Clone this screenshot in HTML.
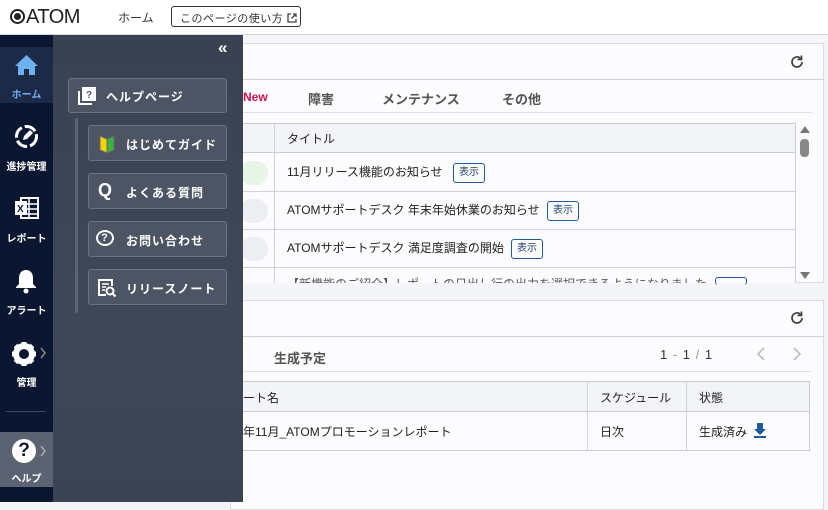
<!DOCTYPE html>
<html><head><meta charset="utf-8"><style>
*{box-sizing:border-box;margin:0;padding:0}
body{width:828px;height:502px;overflow:hidden;background:#f3f5f9;font-family:"Liberation Sans","Noto Sans CJK JP",sans-serif;color:#222;position:relative;font-size:12px}
.abs{position:absolute}
.hdr{left:0;top:0;width:828px;height:35px;background:#fff;border-bottom:1px solid #d5d8de}
.card{background:#fcfcfe;border:1px solid #d9dce2}
.line{background:#cfd2d8}
.t{position:absolute;white-space:nowrap}
.btn{position:absolute;border:1px solid #1f5a9a;border-radius:3px;color:#1f3f66;font-size:10px;height:20px;width:32px;text-align:center;line-height:18px}
.side{left:0;top:35px;width:53px;height:467px;background:#0b1630}
.sl{position:absolute;width:53px;text-align:center;color:#fff;font-size:10px;font-weight:bold}
.fly{left:53px;top:35px;width:190px;height:467px;background:linear-gradient(180deg,#3a4252,#3e4758 60%,#3b4454)}
.fb{position:absolute;border:1px solid #6b7282;border-radius:3px;background:#4d5565;color:#fff;font-weight:bold;font-size:12px;letter-spacing:1px}
</style></head><body>
<div class="abs hdr">
 <div class="t" style="left:10px;top:6px;font-size:20px;color:#222;letter-spacing:-0.5px"><span style="display:inline-block;width:15px;height:15px;border:2px solid #222;border-radius:50%;position:relative;top:1px;margin-right:1px"><span style="position:absolute;left:2px;top:2px;width:7px;height:7px;background:#222;border-radius:50%"></span></span>ATOM</div>
 <div class="t" style="left:118px;top:9px;font-size:12px;color:#333">ホーム</div>
 <div class="abs" style="left:171px;top:6px;width:130px;height:21px;border:1px solid #333;border-radius:3px;font-size:11px;color:#333;padding:3px 0 0 8px;letter-spacing:0.5px;white-space:nowrap">このページの使い方 <svg style="position:relative;top:1px" width="10" height="10" viewBox="0 0 10 10"><path d="M4 1H1v8h8V6M6 1h3v3M9 1L4.5 5.5" fill="none" stroke="#444" stroke-width="1.3"/></svg></div>
</div>

<!-- card 1 -->
<div class="abs card" style="left:230px;top:43px;width:594px;height:240px"></div>
<div class="abs line" style="left:230px;top:79px;width:594px;height:1px"></div>
<svg class="abs" style="left:789px;top:54px" width="16" height="16" viewBox="0 0 16 16"><path d="M13 8a5 5 0 1 1-1.5-3.6" fill="none" stroke="#333" stroke-width="1.6"/><path d="M12.5 1.5v4h-4" fill="none" stroke="#333" stroke-width="1.6"/></svg>
<div class="t" style="left:243px;top:90px;color:#d0114b;font-weight:bold;font-size:12px">New</div>
<div class="t" style="left:308px;top:89px;color:#555;font-weight:bold;font-size:13px">障害</div>
<div class="t" style="left:382px;top:89px;color:#555;font-weight:bold;font-size:13px">メンテナンス</div>
<div class="t" style="left:502px;top:89px;color:#555;font-weight:bold;font-size:13px">その他</div>
<div class="abs" style="left:230px;top:112px;width:582px;height:1px;background:#dfe1e6"></div>
<div class="abs" style="left:230px;top:123px;width:566px;height:160px;border:1px solid #c9ccd2;border-bottom:none;background:#fcfcfe"></div>
<div class="abs" style="left:231px;top:124px;width:564px;height:29px;background:#f3f4f8;border-bottom:1px solid #c9ccd2"></div>
<div class="abs line" style="left:274px;top:123px;width:1px;height:160px"></div>
<div class="abs line" style="left:230px;top:191px;width:566px;height:1px"></div>
<div class="abs line" style="left:230px;top:229px;width:566px;height:1px"></div>
<div class="abs line" style="left:230px;top:267px;width:566px;height:1px"></div>
<div class="t" style="left:287px;top:130px">タイトル</div>
<div class="abs" style="left:240px;top:161px;width:28px;height:24px;background:#e6f5e6;border-radius:12px"></div>
<div class="abs" style="left:240px;top:199px;width:28px;height:24px;background:#eceef2;border-radius:12px"></div>
<div class="abs" style="left:240px;top:237px;width:28px;height:24px;background:#eceef2;border-radius:12px"></div>
<div class="t" style="left:287px;top:163px">11月リリース機能のお知らせ</div><div class="btn" style="left:453px;top:163px">表示</div>
<div class="t" style="left:287px;top:201px">ATOMサポートデスク 年末年始休業のお知らせ</div><div class="btn" style="left:547px;top:201px">表示</div>
<div class="t" style="left:287px;top:239px">ATOMサポートデスク 満足度調査の開始</div><div class="btn" style="left:511px;top:239px">表示</div>
<div class="abs" style="left:287px;top:277px;width:420px;height:6px;overflow:hidden;color:#555"><span style="position:relative;top:-2px">【新機能のご紹介】レポートの日出し行の出力を選択できるようになりました</span></div>
<div class="btn" style="left:715px;top:277px;height:8px;border-bottom:none"></div>
<div class="abs" style="left:800px;top:126px;width:0;height:0;border-left:5px solid transparent;border-right:5px solid transparent;border-bottom:7px solid #777"></div>
<div class="abs" style="left:800px;top:139px;width:9px;height:18px;background:#888;border-radius:4px"></div>
<div class="abs" style="left:800px;top:272px;width:0;height:0;border-left:5px solid transparent;border-right:5px solid transparent;border-top:7px solid #777"></div>

<!-- card 2 -->
<div class="abs card" style="left:230px;top:300px;width:594px;height:210px"></div>
<div class="abs line" style="left:230px;top:336px;width:594px;height:1px"></div>
<svg class="abs" style="left:789px;top:310px" width="16" height="16" viewBox="0 0 16 16"><path d="M13 8a5 5 0 1 1-1.5-3.6" fill="none" stroke="#333" stroke-width="1.6"/><path d="M12.5 1.5v4h-4" fill="none" stroke="#333" stroke-width="1.6"/></svg>
<div class="t" style="left:274px;top:348px;color:#555;font-weight:bold;font-size:13px">生成予定</div>
<div class="t" style="left:660px;top:347px;color:#333;letter-spacing:1px;font-size:13px">1 <span style="color:#999">-</span> 1 <span style="color:#999">/</span> 1</div>
<svg class="abs" style="left:756px;top:347px" width="10" height="14" viewBox="0 0 10 14"><path d="M8 1L2 7l6 6" fill="none" stroke="#bbb" stroke-width="1.6"/></svg>
<svg class="abs" style="left:792px;top:347px" width="10" height="14" viewBox="0 0 10 14"><path d="M2 1l6 6-6 6" fill="none" stroke="#bbb" stroke-width="1.6"/></svg>
<div class="abs" style="left:230px;top:371px;width:582px;height:1px;background:#dfe1e6"></div>
<div class="abs" style="left:230px;top:381px;width:580px;height:70px;border:1px solid #c9ccd2"></div>
<div class="abs" style="left:231px;top:382px;width:578px;height:30px;background:#f3f4f8;border-bottom:1px solid #c9ccd2"></div>
<div class="abs line" style="left:587px;top:381px;width:1px;height:70px"></div>
<div class="abs line" style="left:686px;top:381px;width:1px;height:70px"></div>
<div class="t" style="left:243px;top:389px">ート名</div>
<div class="t" style="left:600px;top:389px">スケジュール</div>
<div class="t" style="left:699px;top:389px">状態</div>
<div class="t" style="left:243px;top:423px">年11月_ATOMプロモーションレポート</div>
<div class="t" style="left:600px;top:423px">日次</div>
<div class="t" style="left:699px;top:423px">生成済み</div>
<svg class="abs" style="left:753px;top:422px" width="14" height="16" viewBox="0 0 14 16"><path d="M4 1h6v6h3l-6 6-6-6h3z" fill="#1f5a9a"/><rect x="1" y="14" width="12" height="2" fill="#1f5a9a"/></svg>

<!-- sidebar -->
<div class="abs side">
 <div class="abs" style="left:0;top:12px;width:53px;height:56px;background:#1c2a47"></div>
 <svg class="abs" style="left:14px;top:19px" width="25" height="22" viewBox="0 0 25 22"><path d="M12.5 1L1 12h3v9h6v-6h5v6h6v-9h3z" fill="#6fb0f0"/></svg>
 <div class="sl" style="top:51px;color:#6fb0f0">ホーム</div>
 <svg class="abs" style="left:14px;top:89px" width="25" height="25" viewBox="0 0 25 25"><circle cx="12.5" cy="12.5" r="10" fill="none" stroke="#fff" stroke-width="3" stroke-dasharray="12 3"/><path d="M9 16l1-4 6-6 3 3-6 6z" fill="#fff"/></svg>
 <div class="sl" style="top:123px">進捗管理</div>
 <svg class="abs" style="left:14px;top:162px" width="25" height="22" viewBox="0 0 25 22"><rect x="7" y="1" width="17" height="20" fill="none" stroke="#fff" stroke-width="2"/><path d="M7 7h17M7 12h17M7 17h17M15 1v20" stroke="#fff" stroke-width="1.5"/><rect x="1" y="4" width="12" height="14" fill="#fff"/><text x="3" y="15" font-size="10" font-weight="bold" fill="#0b1630" font-family="Liberation Sans">X</text></svg>
 <div class="sl" style="top:195px">レポート</div>
 <svg class="abs" style="left:15px;top:233px" width="22" height="26" viewBox="0 0 22 26"><path d="M11 2c-5 0-7 4-7 8v6l-3 3v1h20v-1l-3-3v-6c0-4-2-8-7-8z" fill="#fff"/><circle cx="11" cy="23" r="2.5" fill="#fff"/></svg>
 <div class="sl" style="top:267px">アラート</div>
 <svg class="abs" style="left:11px;top:306px" width="26" height="26" viewBox="0 0 26 26"><circle cx="13" cy="13" r="8" fill="none" stroke="#fff" stroke-width="6"/><path d="M13 1v5M13 20v5M1 13h5M20 13h5M4.5 4.5l3.5 3.5M18 18l3.5 3.5M4.5 21.5l3.5-3.5M18 8l3.5-3.5" stroke="#fff" stroke-width="5"/><circle cx="13" cy="13" r="3.5" fill="#0b1630"/></svg>
 <svg class="abs" style="left:40px;top:312px" width="6" height="12" viewBox="0 0 6 12"><path d="M1 1l4 5-4 5" fill="none" stroke="#888" stroke-width="1.5"/></svg>
 <div class="sl" style="top:339px">管理</div>
 <div class="abs" style="left:6px;top:376px;width:40px;height:1px;background:#3a4560"></div>
 <div class="abs" style="left:0;top:397px;width:53px;height:55px;background:#5b6272"></div>
 <div class="abs" style="left:12px;top:404px;width:24px;height:24px;background:#fff;border-radius:50%;text-align:center;color:#0b1630;font-weight:bold;font-size:19px;line-height:24px">?</div>
 <svg class="abs" style="left:40px;top:410px" width="6" height="12" viewBox="0 0 6 12"><path d="M1 1l4 5-4 5" fill="none" stroke="#aaa" stroke-width="1.5"/></svg>
 <div class="sl" style="top:435px">ヘルプ</div>
</div>

<!-- flyout -->
<div class="abs fly">
 <div class="t" style="left:165px;top:3px;color:#fff;font-size:17px;font-weight:bold">&laquo;</div>
 <div class="fb" style="left:15px;top:43px;width:159px;height:35px"><svg class="abs" style="left:8px;top:7px" width="20" height="20" viewBox="0 0 20 20"><path d="M2 5v13h13" fill="none" stroke="#fff" stroke-width="2"/><rect x="5" y="1" width="14" height="14" fill="#fff"/><text x="9" y="12" font-size="10" font-weight="bold" fill="#4d5565" font-family="Liberation Sans">?</text></svg><span class="t" style="left:37px;top:9px">ヘルプページ</span></div>
 <div class="abs" style="left:22px;top:83px;width:3px;height:195px;background:#5a6278;border-radius:2px"></div>
 <div class="fb" style="left:35px;top:90px;width:139px;height:36px"><svg class="abs" style="left:10px;top:8px" width="16" height="20" viewBox="0 0 16 20"><path d="M1 2l7 3v14l-7-3z" fill="#f5d400" stroke="#666"/><path d="M15 2l-7 3v14l7-3z" fill="#3cb043" stroke="#666"/></svg><span class="t" style="left:37px;top:10px">はじめてガイド</span></div>
 <div class="fb" style="left:35px;top:138px;width:139px;height:36px"><span class="t" style="left:9px;top:6px;font-size:18px;font-family:'Liberation Sans',sans-serif">Q</span><span class="t" style="left:37px;top:10px">よくある質問</span></div>
 <div class="fb" style="left:35px;top:186px;width:139px;height:36px"><div class="abs" style="left:7px;top:8px;width:18px;height:16px;border:2px solid #fff;border-radius:50%;text-align:center;font-size:11px;line-height:12px">?</div><span class="t" style="left:37px;top:10px">お問い合わせ</span></div>
 <div class="fb" style="left:35px;top:234px;width:139px;height:36px"><svg class="abs" style="left:8px;top:8px" width="20" height="20" viewBox="0 0 20 20"><path d="M9 17H2V2h13v6" fill="none" stroke="#fff" stroke-width="2"/><path d="M5 6h7M5 9h4M5 12h3" stroke="#fff" stroke-width="1.5"/><circle cx="13" cy="13" r="3.5" fill="none" stroke="#fff" stroke-width="2"/><path d="M15.5 15.5l3 3" stroke="#fff" stroke-width="2.2"/></svg><span class="t" style="left:37px;top:10px">リリースノート</span></div>
</div>
</body></html>
